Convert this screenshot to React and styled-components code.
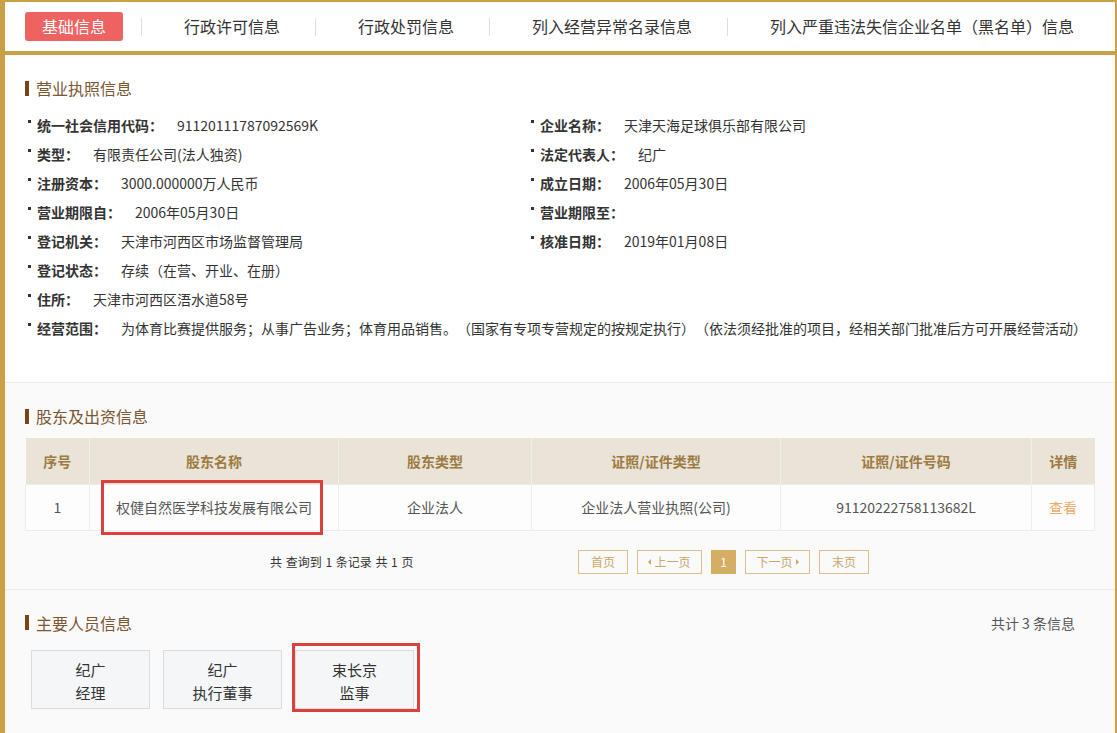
import styled, { createGlobalStyle } from "styled-components";

const GOLD = "#c9a046";
const FONT = `"Microsoft YaHei", "Noto Sans CJK SC", "Noto Sans", sans-serif`;

const tabs = ["基础信息", "行政许可信息", "行政处罚信息", "列入经营异常名录信息", "列入严重违法失信企业名单（黑名单）信息"];

const licenseRows = [
    [["统一社会信用代码：", "91120111787092569K"], ["企业名称：", "天津天海足球俱乐部有限公司"]],
    [["类型：", "有限责任公司(法人独资)"], ["法定代表人：", "纪广"]],
    [["注册资本：", "3000.000000万人民币"], ["成立日期：", "2006年05月30日"]],
    [["营业期限自：", "2006年05月30日"], ["营业期限至：", ""]],
    [["登记机关：", "天津市河西区市场监督管理局"], ["核准日期：", "2019年01月08日"]],
    [["登记状态：", "存续（在营、开业、在册）"], null],
    [["住所：", "天津市河西区浯水道58号"], null],
];

const scope = "为体育比赛提供服务；从事广告业务；体育用品销售。（国家有专项专营规定的按规定执行）（依法须经批准的项目，经相关部门批准后方可开展经营活动）";

const columns = [
    { title: "序号", width: 64 },
    { title: "股东名称", width: 249 },
    { title: "股东类型", width: 193 },
    { title: "证照/证件类型", width: 249 },
    { title: "证照/证件号码", width: 251 },
    { title: "详情", width: 63 },
];

const people = [
    { name: "纪广", role: "经理" },
    { name: "纪广", role: "执行董事" },
    { name: "束长京", role: "监事", marked: true },
];

const GlobalStyle = createGlobalStyle`
    html, body {
        margin: 0;
        background: #ffffff;
        font-family: ${FONT};
        text-spacing-trim: space-all;
    }
    * {
        box-sizing: border-box;
    }
`;

export default function App() {
    return (
        <>
            <GlobalStyle />
            <Page>
                <TabBar>
                    {tabs.map((t, i) => (
                        <TabGroup key={t}>
                            {i > 0 && <TabDivider />}
                            <Tab active={i === 0}>{t}</Tab>
                        </TabGroup>
                    ))}
                </TabBar>

                <Section>
                    <SectionTitle>营业执照信息</SectionTitle>
                    <InfoGrid>
                        {licenseRows.map((row, i) => (
                            <InfoRowFrag key={i} row={row} />
                        ))}
                        <InfoItem wide>
                            <Label>经营范围：</Label>
                            <Value>{scope}</Value>
                        </InfoItem>
                    </InfoGrid>
                </Section>

                <Section muted pb={15}>
                    <SectionTitle>股东及出资信息</SectionTitle>
                    <Table>
                        <colgroup>
                            {columns.map((c) => (
                                <col key={c.title} style={{ width: c.width }} />
                            ))}
                        </colgroup>
                        <thead>
                            <tr>
                                {columns.map((c) => (
                                    <Th key={c.title}>{c.title}</Th>
                                ))}
                            </tr>
                        </thead>
                        <tbody>
                            <tr>
                                <Td>1</Td>
                                <Td marked>权健自然医学科技发展有限公司</Td>
                                <Td>企业法人</Td>
                                <Td>企业法人营业执照(公司)</Td>
                                <Td>91120222758113682L</Td>
                                <Td><ViewLink>查看</ViewLink></Td>
                            </tr>
                        </tbody>
                    </Table>
                    <Pager>
                        <PagerInfo>共&nbsp;查询到&nbsp;1&nbsp;条记录&nbsp;共&nbsp;1&nbsp;页</PagerInfo>
                        <PageButton>首页</PageButton>
                        <PageButton narrow><Arrow dir="left" />上一页</PageButton>
                        <PageButton current>1</PageButton>
                        <PageButton narrow>下一页<Arrow dir="right" /></PageButton>
                        <PageButton>末页</PageButton>
                    </Pager>
                </Section>

                <Section muted pb={30}>
                    <TitleRow>
                        <SectionTitle>主要人员信息</SectionTitle>
                        <Total>共计 3 条信息</Total>
                    </TitleRow>
                    <Cards>
                        {people.map((p, i) => (
                            <PersonCard key={i} marked={p.marked}>
                                <div>{p.name}</div>
                                <div>{p.role}</div>
                            </PersonCard>
                        ))}
                    </Cards>
                </Section>
            </Page>
        </>
    );
}

const InfoRowFrag = ({ row }) => (
    <>
        {row.map((cell, i) =>
            cell ? (
                <InfoItem key={i}>
                    <Label>{cell[0]}</Label>
                    <Value>{cell[1]}</Value>
                </InfoItem>
            ) : (
                <span key={i} />
            )
        )}
    </>
);

const Page = styled.div`
    width: 1117px;
    border-top: 2px solid ${GOLD};
    border-left: 5px solid ${GOLD};
    border-right: 2px solid ${GOLD};
    color: #333;
`;

const TabBar = styled.div`
    display: flex;
    align-items: center;
    height: 53px;
    padding-left: 20px;
    border-bottom: 4px solid ${GOLD};
    background: #fff;
`;

const TabGroup = styled.div`
    display: flex;
    align-items: center;
`;

const TabDivider = styled.span`
    width: 1px;
    height: 18px;
    background: #dedede;
    margin: 0 25px 0 18px;
`;

const Tab = styled.div`
    height: 29px;
    line-height: 29px;
    padding: 0 17px;
    font-size: 16px;
    white-space: nowrap;
    border-radius: 3px;
    color: ${(p) => (p.active ? "#fff" : "#333")};
    background: ${(p) => (p.active ? "#ef6262" : "transparent")};
`;

const Section = styled.section`
    padding: 23px 21px ${(p) => (p.pb !== undefined ? p.pb : 40)}px 20px;
    background: ${(p) => (p.muted ? "#fafafa" : "#fff")};
    border-top: ${(p) => (p.muted ? "1px solid #ececec" : "none")};
`;

const TitleRow = styled.div`
    display: flex;
    justify-content: space-between;
    align-items: center;
`;

const SectionTitle = styled.h3`
    display: flex;
    align-items: center;
    margin: 0;
    height: 20px;
    font-size: 16px;
    font-weight: normal;
    color: #7b5631;
    &::before {
        content: "";
        width: 4px;
        height: 15px;
        margin-right: 7px;
        background: #7a4513;
    }
`;

const Total = styled.span`
    font-size: 14px;
    color: #555;
    margin-right: 19px;
`;

const InfoGrid = styled.div`
    display: grid;
    grid-template-columns: 503px 1fr;
    grid-auto-rows: 29px;
    margin-top: 12px;
`;

const InfoItem = styled.div`
    display: flex;
    align-items: center;
    padding-left: 3px;
    font-size: 14px;
    white-space: nowrap;
    grid-column: ${(p) => (p.wide ? "1 / -1" : "auto")};
    &::before {
        content: "";
        width: 3px;
        height: 3px;
        margin: 0 6px 7px 0;
        background: #333;
    }
`;

const Label = styled.span`
    font-weight: bold;
    margin-right: 14px;
`;

const Value = styled.span`
    color: #333;
`;

const Table = styled.table`
    width: 1069px;
    margin-top: 12px;
    border-collapse: collapse;
    table-layout: fixed;
    font-size: 14px;
`;

const Th = styled.th`
    height: 46px;
    background: #e9e3d8;
    color: #9d7a40;
    font-weight: bold;
    border-right: 1px solid #f3efe7;
    &:last-child {
        border-right: none;
    }
`;

const Td = styled.td`
    position: relative;
    height: 46px;
    text-align: center;
    color: #555;
    background: #fdfdfd;
    border: 1px solid #ececec;
    ${(p) =>
        p.marked &&
        `
        &::after {
            content: "";
            position: absolute;
            left: 11px;
            right: 15px;
            top: -5px;
            bottom: -5px;
            border: 3px solid #d9403e;
        }
    `}
`;

const ViewLink = styled.span`
    color: #f0a868;
`;

const Pager = styled.div`
    display: flex;
    align-items: center;
    gap: 9px;
    margin-top: 19px;
    padding-left: 245px;
    font-size: 12px;
`;

const PagerInfo = styled.span`
    flex: 0 0 299px;
    color: #333;
    word-spacing: 1px;
`;

const PageButton = styled.span`
    display: inline-flex;
    align-items: center;
    justify-content: center;
    height: 24px;
    width: ${(p) => (p.current ? 25 : p.narrow ? 65 : 50)}px;
    border: 1px solid ${(p) => (p.current ? "#d6ae63" : "#dcbf8a")};
    background: ${(p) => (p.current ? "#d6ae63" : "transparent")};
    color: ${(p) => (p.current ? "#fff" : "#c9a66c")};
`;

const Arrow = styled.span`
    width: 0;
    height: 0;
    border-top: 3px solid transparent;
    border-bottom: 3px solid transparent;
    ${(p) =>
        p.dir === "left"
            ? `border-right: 3px solid #c9a66c; margin-right: 3px;`
            : `border-left: 3px solid #c9a66c; margin-left: 3px;`}
`;

const Cards = styled.div`
    display: flex;
    gap: 13px;
    margin-top: 17px;
    padding-left: 6px;
`;

const PersonCard = styled.div`
    position: relative;
    width: 119px;
    height: 59px;
    padding-top: 7px;
    text-align: center;
    font-size: 15px;
    line-height: 23px;
    color: #333;
    background: #f4f6f7;
    border: 1px solid #dcdcdc;
    ${(p) =>
        p.marked &&
        `
        &::after {
            content: "";
            position: absolute;
            left: -4px;
            right: -7px;
            top: -8px;
            bottom: -4px;
            border: 3px solid #d9403e;
        }
    `}
`;
